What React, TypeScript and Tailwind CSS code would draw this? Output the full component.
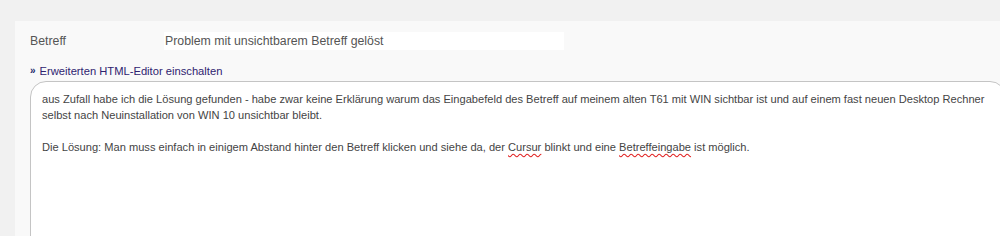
export default function App() {
  const font = { fontFamily: '"Liberation Sans", Arial, sans-serif' };
  return (
    <div className="h-[236px] w-[1000px] overflow-hidden bg-[#f1f1f1] pt-[21px] pl-[15px]" style={font}>
      <div className="h-[300px] w-[1100px] bg-[#f9f9f9] pt-[11px] pl-[15px]">
        {/* Betreff row */}
        <div className="flex h-[18px] items-center text-[12.3px] text-[#555]">
          <span className="w-[134px]">Betreff</span>
          <div className="flex h-[18px] w-[400px] items-center bg-white pl-[1px]">
            Problem mit unsichtbarem Betreff gelöst
          </div>
        </div>

        {/* HTML editor toggle */}
        <div className="mt-[14px] flex items-center text-[11.2px] leading-[14px] text-[#2f2370]">
          <span className="mr-[4px] text-[10px] font-bold text-[#1b2a6b]">»</span>
          <span>Erweiterten HTML-Editor einschalten</span>
        </div>

        {/* Editor */}
        <div className="mt-[3px] h-[200px] w-[976px] rounded-[16px] border border-[#c4c4c4] bg-white px-[11px] pt-[9px] text-[11.1px] leading-[16px] text-[#444]">
          <p>
            aus Zufall habe ich die Lösung gefunden - habe zwar keine Erklärung warum das Eingabefeld des Betreff auf meinem alten T61 mit WIN sichtbar ist und auf einem fast neuen Desktop Rechner selbst nach Neuinstallation von WIN 10 unsichtbar bleibt.
          </p>
          <p className="mt-[16px]">
            Die Lösung: Man muss einfach in einigem Abstand hinter den Betreff klicken und siehe da, der{" "}
            <span className="underline decoration-wavy decoration-[#e02020] underline-offset-2">Cursur</span> blinkt und eine{" "}
            <span className="underline decoration-wavy decoration-[#e02020] underline-offset-2">Betreffeingabe</span> ist möglich.
          </p>
        </div>
      </div>
    </div>
  );
}
